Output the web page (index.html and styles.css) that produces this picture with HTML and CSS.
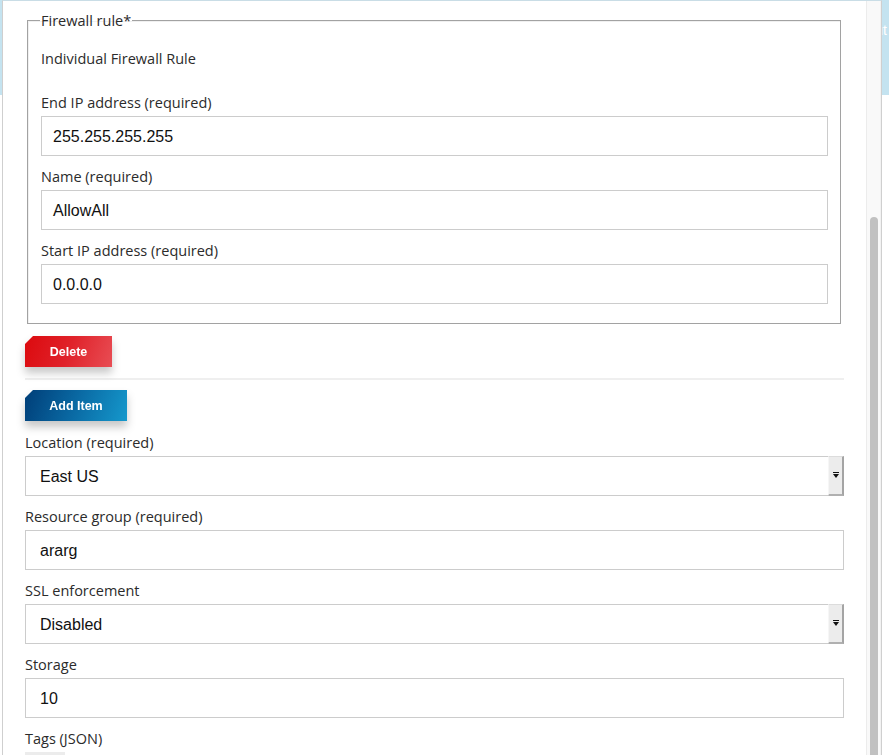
FILE: index.html
```html
<!DOCTYPE html>
<html>
<head>
<meta charset="utf-8">
<link rel="stylesheet" href="styles.css">
</head>
<body>
<header class="page-header"><span class="header-link">Logout</span></header>
<div class="modal">
  <div class="modal-body">
    <fieldset class="rule">
      <legend class="rule-legend">Firewall rule*</legend>
      <p class="rule-title">Individual Firewall Rule</p>
      <div class="field field-first">
        <label class="field-label">End IP address (required)</label>
        <div class="input input-inner">255.255.255.255</div>
      </div>
      <div class="field">
        <label class="field-label">Name (required)</label>
        <div class="input input-inner">AllowAll</div>
      </div>
      <div class="field">
        <label class="field-label">Start IP address (required)</label>
        <div class="input input-inner">0.0.0.0</div>
      </div>
    </fieldset>
    <div class="btn-wrap btn-wrap-delete"><button class="btn btn-delete">Delete</button></div>
    <div class="divider"></div>
    <div class="btn-wrap btn-wrap-add"><button class="btn btn-add">Add Item</button></div>
    <div class="field field-outer-first">
      <label class="field-label">Location (required)</label>
      <div class="select"><span class="select-value">East US</span><span class="select-arrow"><span class="tri"></span></span></div>
    </div>
    <div class="field">
      <label class="field-label">Resource group (required)</label>
      <div class="input">ararg</div>
    </div>
    <div class="field">
      <label class="field-label">SSL enforcement</label>
      <div class="select"><span class="select-value">Disabled</span><span class="select-arrow"><span class="tri"></span></span></div>
    </div>
    <div class="field">
      <label class="field-label">Storage</label>
      <div class="input">10</div>
    </div>
    <div class="field">
      <label class="field-label">Tags (JSON)</label>
      <div class="tags-box"><span class="tags-block"></span></div>
    </div>
  </div>
  <div class="scrollbar"><div class="scroll-thumb"></div></div>
</div>
</body>
</html>
```
FILE: styles.css
```css
html, body {
  margin: 0;
  padding: 0;
  background: #ffffff;
  height: 755px;
  overflow: hidden;
}
body {
  font-family: "Open Sans", "Liberation Sans", sans-serif;
  position: relative;
}
.page-header {
  height: 95px;
  background: #c4e3f0;
  display: flex;
  justify-content: flex-end;
  align-items: flex-start;
}
.header-link {
  color: #ffffff;
  font-size: 14px;
  line-height: 20px;
  margin-top: 20px;
  margin-right: 2px;
  font-family: "Liberation Sans", sans-serif;
}
.modal {
  position: absolute;
  top: 0;
  left: 2px;
  width: 878px;
  height: 754px;
  background: #ffffff;
  border: 1px solid #cfcfcf;
  border-bottom: none;
  border-top-color: #c9dde6;
  display: flex;
  overflow: hidden;
}
.modal-body {
  flex: 1;
  padding: 9px 22px 0 22px;
  min-width: 0;
}
.rule {
  margin: 0 3px 0 2px;
  padding: 0 12px 19px 13px;
  border: 1px solid #a2a2a2;
  box-shadow: inset 1px 1px 0 #f0f0f0;
  min-width: 0;
}
.rule-legend {
  padding: 1px 1px 0 1px;
  margin-left: -1px;
  font-size: 14.5px;
  line-height: 19px;
  color: #2b2b2b;
}
.rule-title {
  margin: 18px 0 24px 0;
  padding-top: 1px;
  font-size: 14.5px;
  line-height: 19px;
  color: #2b2b2b;
}
.field {
  margin-top: 10px;
}
.field-first {
  margin-top: 0;
}
.field-outer-first {
  margin-top: 11px;
}
.field-label {
  display: block;
  font-size: 14.5px;
  line-height: 19px;
  padding-top: 1px;
  color: #2b2b2b;
  margin-bottom: 4px;
}
.input {
  box-sizing: border-box;
  height: 40px;
  border: 1px solid #cccccc;
  padding: 1px 14px 0 14px;
  display: flex;
  align-items: center;
  font-family: "Liberation Sans", Arial, sans-serif;
  font-size: 16px;
  color: #111111;
}
.input-inner {
  padding: 1px 11px 0 11px;
}
.select {
  box-sizing: border-box;
  height: 40px;
  border: 1px solid #cccccc;
  border-right: none;
  display: flex;
  align-items: stretch;
  font-family: "Liberation Sans", Arial, sans-serif;
  font-size: 16px;
  color: #111111;
}
.select-value {
  flex: 1;
  display: flex;
  align-items: center;
  padding-left: 14px;
  padding-top: 1px;
}
.select-arrow {
  box-sizing: border-box;
  width: 16px;
  margin-top: -1px;
  margin-bottom: -1px;
  background: #ececec;
  border-left: 1px solid #f6f6f6;
  border-top: 1px solid #dcdcdc;
  border-right: 2px solid #a4a4a4;
  border-bottom: 2px solid #b0b0b0;
  display: flex;
  align-items: center;
  justify-content: center;
}
.tri {
  width: 0;
  height: 0;
  border-left: 3px solid transparent;
  border-right: 3px solid transparent;
  border-top: 4px solid #111111;
  position: relative;
}
.tri::before {
  content: "";
  position: absolute;
  left: -3px;
  top: -6px;
  width: 6px;
  height: 1px;
  background: #111111;
}
.btn-wrap {
  display: flex;
  filter: drop-shadow(0 6px 4px rgba(0, 0, 0, 0.22));
}
.btn-wrap-delete {
  margin-top: 12px;
}
.btn-wrap-add {
  margin-top: 10px;
}
.btn {
  height: 31px;
  padding: 1px 0 0 0;
  border: none;
  color: #ffffff;
  font-family: "Liberation Sans", Arial, sans-serif;
  font-weight: bold;
  font-size: 12.5px;
  clip-path: polygon(8px 0, 100% 0, 100% 100%, 0 100%, 0 8px);
  cursor: pointer;
}
.btn-delete {
  width: 87px;
  background: linear-gradient(110deg, #dc0a0e 0%, #e0222a 50%, #e84d54 100%);
}
.btn-add {
  width: 102px;
  background: linear-gradient(110deg, #003e78 0%, #0a6aa4 50%, #1598cc 100%);
}
.divider {
  margin-top: 11px;
  height: 2px;
  background: #efefef;
}
.tags-box {
  display: flex;
  align-items: flex-start;
  height: 20px;
}
.tags-block {
  width: 40px;
  height: 12px;
  background: #ececec;
}
.scrollbar {
  box-sizing: border-box;
  width: 15px;
  background: #f9f9f9;
  border-left: 1px solid #ececec;
  border-right: 1px solid #f2f2f2;
  padding-left: 3px;
}
.scroll-thumb {
  width: 8px;
  height: 700px;
  margin-top: 216px;
  background: #c1c1c1;
  border-radius: 4px;
}
```
